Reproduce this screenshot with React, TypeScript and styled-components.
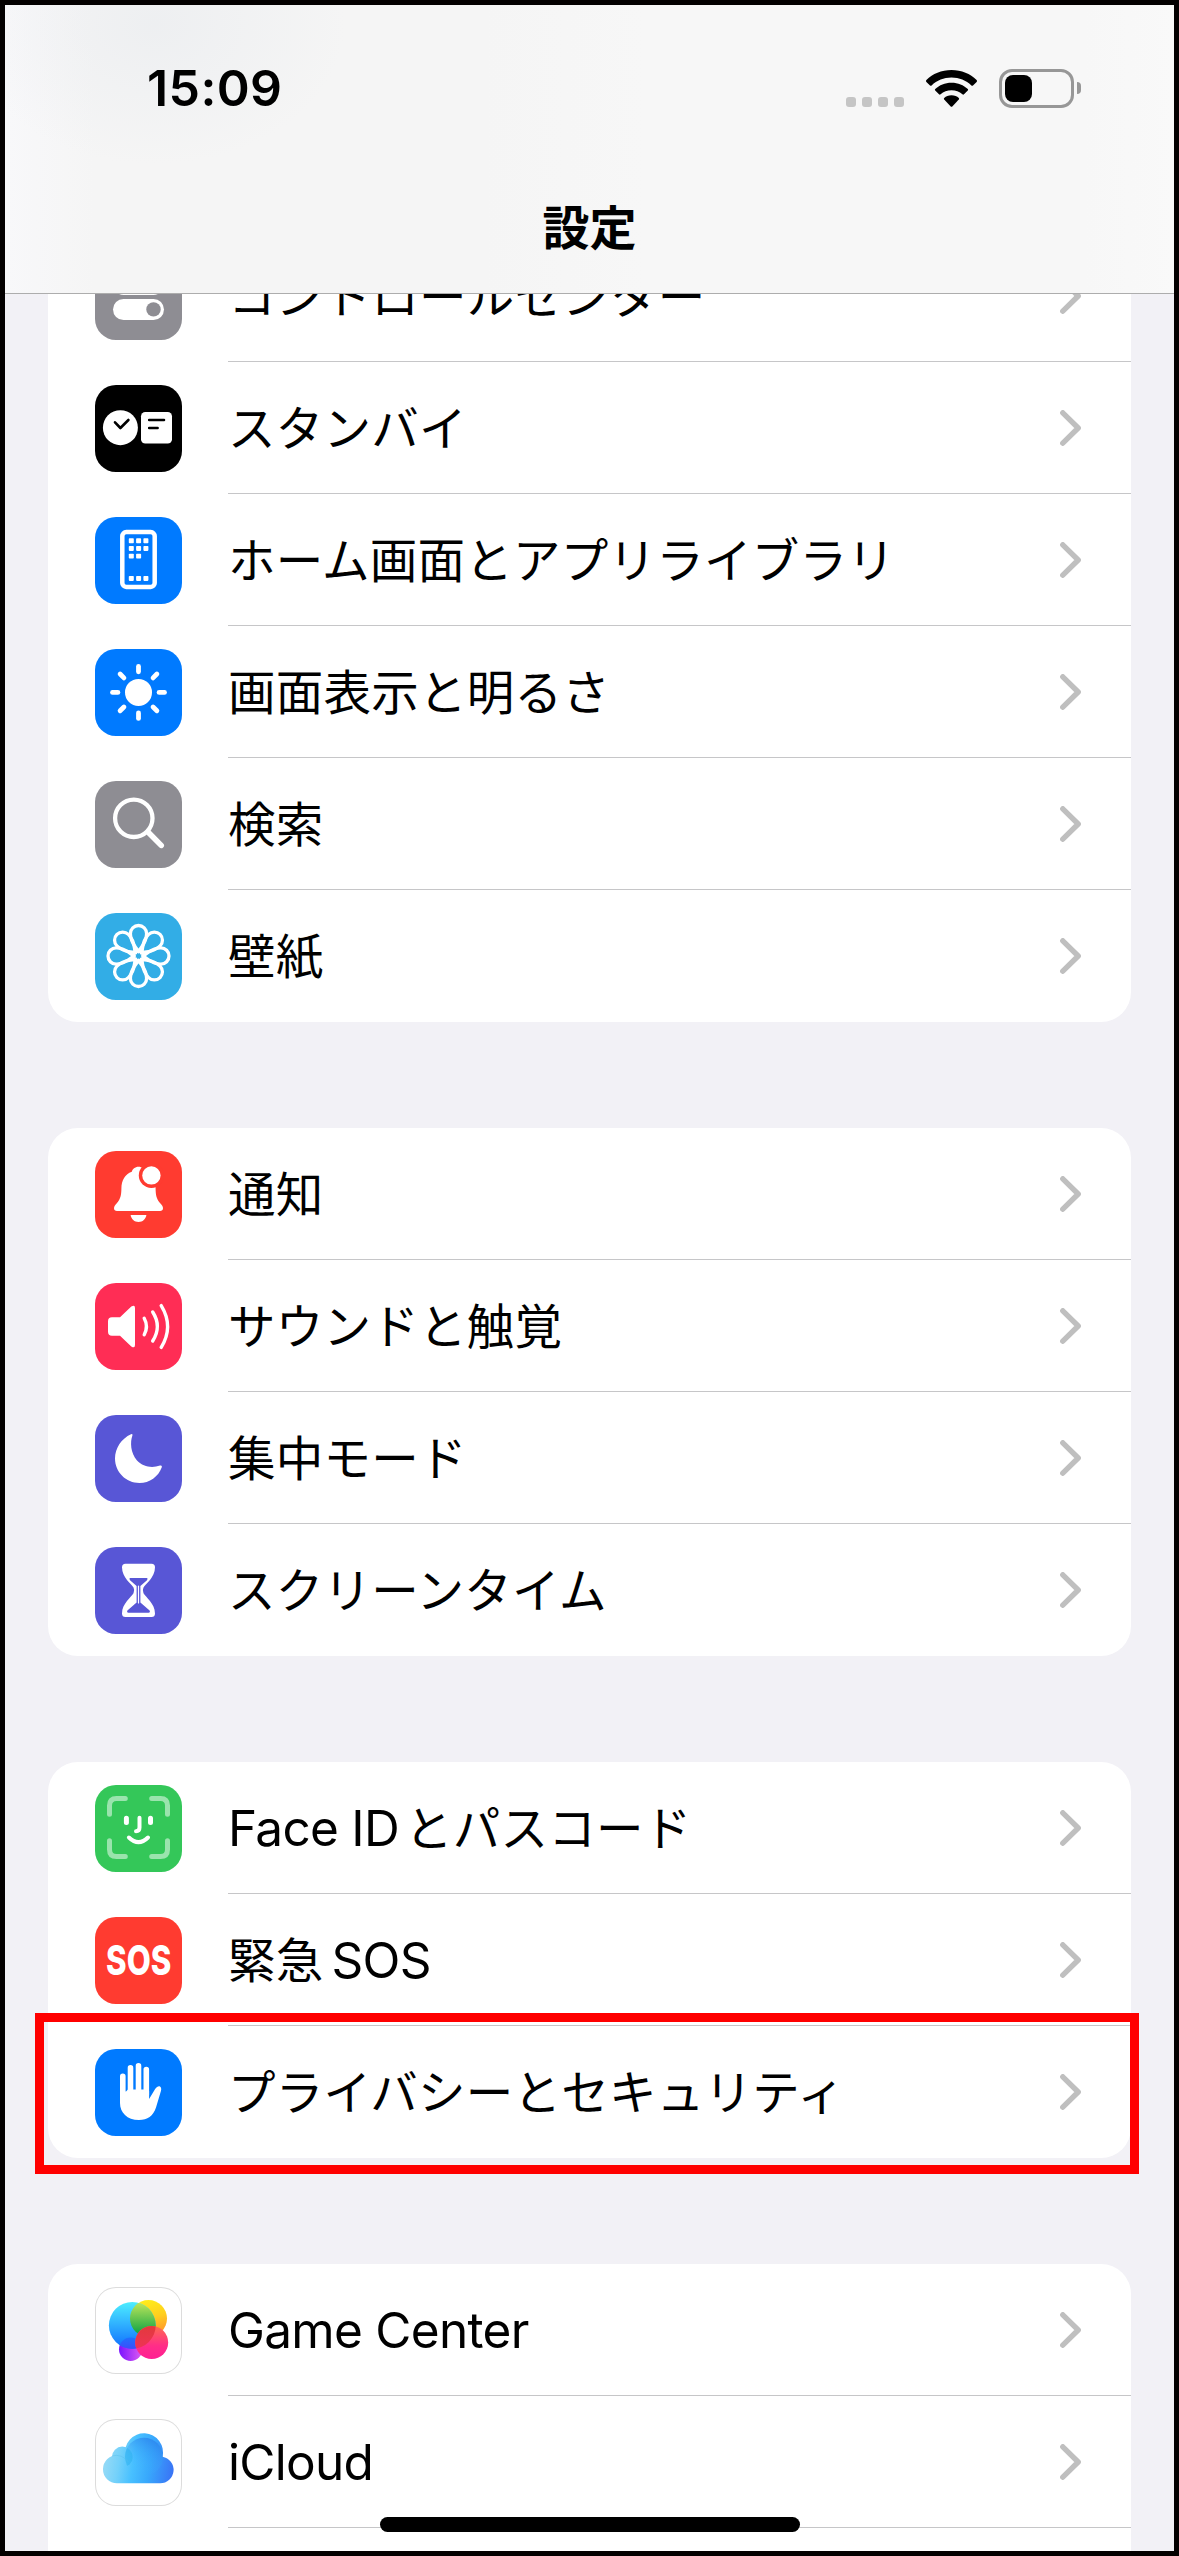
import React from 'react';
import styled, { createGlobalStyle } from 'styled-components';

const GlobalStyle = createGlobalStyle`
  * { box-sizing: border-box; }
  body {
    margin: 0;
    background: #f2f1f6;
    font-family: "Noto Sans CJK JP", Inter, sans-serif;
    color: #000;
  }
`;

const Phone = styled.div`
  position: relative;
  width: 1179px;
  height: 2556px;
  border: 5px solid #030000;
  background: #f2f1f6;
  display: flex;
  flex-direction: column;
  overflow: hidden;
`;

const Header = styled.header`
  flex: none;
  height: 289px;
  border-bottom: 1px solid #adadad;
  background:
    radial-gradient(ellipse 190px 140px at 150px 20px, rgba(230, 233, 237, 0.5), rgba(245, 245, 245, 0)),
    linear-gradient(90deg, #f8f8fa 0, #f5f5f5 90px, #f5f5f5 480px, #f7f7f7 640px, #f7f7f7 1080px, #f9f9f9 100%);
  display: flex;
  flex-direction: column;
`;

const StatusBar = styled.div`
  height: 166px;
  padding: 0 93px 0 142px;
  display: flex;
  justify-content: space-between;
  align-items: center;
`;

const Clock = styled.time`
  font: 600 50px/60px Inter, sans-serif;
  letter-spacing: 0.4px;
`;

const StatusIcons = styled.div`
  display: flex;
  align-items: flex-start;
`;

const Dots = styled.div`
  display: flex;
  gap: 6px;
  margin: 28px 22px 0 0;
`;

const Dot = styled.i`
  width: 10px;
  height: 10px;
  border-radius: 3px;
  background: #c5c5c5;
`;

const Wifi = styled.svg`
  width: 51px;
  height: 38px;
  margin: 1px 22px 0 0;
`;

const Battery = styled.div`
  width: 75px;
  height: 39px;
  padding: 3px;
  border: 3px solid #979797;
  border-radius: 13px;
`;

const Charge = styled.div`
  width: 27px;
  height: 27px;
  border-radius: 8px;
  background: #000;
`;

const BatteryCap = styled.div`
  width: 4px;
  height: 12px;
  margin: 13px 0 0 3px;
  border-radius: 0 5px 5px 0;
  background: #979797;
`;

const Title = styled.h1`
  margin: 19px 0 0;
  font-size: 47px;
  line-height: 70px;
  font-weight: 700;
  text-align: center;
`;

const ScrollArea = styled.main`
  flex: 1;
  min-height: 0;
  overflow: hidden;
  padding: 0 43px;
`;

const List = styled.div`
  margin-top: -64px;
  display: flex;
  flex-direction: column;
  gap: 106px;
`;

const Group = styled.section`
  background: #fff;
  border-radius: 30px;
`;

const RowBox = styled.div`
  position: relative;
  height: 132px;
  padding-left: 47px;
  display: flex;
  align-items: center;
`;

const Tile = styled.div<{ $bg: string; $outlined?: boolean }>`
  flex: none;
  width: 87px;
  height: 87px;
  margin-top: 1px;
  border-radius: 21px;
  overflow: hidden;
  background: ${(p) => p.$bg};
  box-shadow: ${(p) => (p.$outlined ? 'inset 0 0 0 1px #dcdcdc' : 'none')};

  svg {
    display: block;
    width: 87px;
    height: 87px;
  }
`;

const RowBody = styled.div<{ $line: boolean }>`
  flex: 1;
  height: 100%;
  margin-left: 46px;
  padding-right: 50px;
  border-bottom: 1px solid ${(p) => (p.$line ? '#c6c6c8' : 'transparent')};
  display: flex;
  justify-content: space-between;
  align-items: center;
`;

const Label = styled.span`
  padding-bottom: 3px;
  font-size: 47.5px;
  letter-spacing: 0.25px;
  line-height: 70px;
  white-space: nowrap;
`;

const Latin = styled.span<{ $after?: boolean; $before?: boolean }>`
  font-family: Inter, sans-serif;
  font-size: 49.5px;
  line-height: 0;
  letter-spacing: -0.7px;
  margin-right: ${(p) => (p.$after ? '6px' : '0')};
  margin-left: ${(p) => (p.$before ? '8px' : '0')};
`;

const Chevron = styled.svg`
  width: 21px;
  height: 36px;
`;

const Highlight = styled.div`
  position: absolute;
  left: -13px;
  top: -13px;
  width: 1104px;
  height: 161px;
  border: 9px solid #ff0000;
`;

const HomeIndicator = styled.div`
  position: absolute;
  left: 375px;
  bottom: 19px;
  width: 420px;
  height: 15px;
  border-radius: 8px;
  background: #000;
`;

const Icon = ({ children }: { children: React.ReactNode }) => (
  <svg viewBox="0 0 87 87" fill="none" strokeLinecap="round" strokeLinejoin="round">
    {children}
  </svg>
);

const ControlCenterIcon = () => (
  <Icon>
    <rect x="20" y="22.5" width="47" height="17.5" rx="8.7" stroke="#fff" strokeWidth="4" />
    <circle cx="29" cy="31" r="7.3" fill="#fff" />
    <rect x="18" y="46" width="51" height="21" rx="10.5" fill="#fff" />
    <circle cx="58.5" cy="56.4" r="7.2" fill="#8e8d93" />
  </Icon>
);

const StandByIcon = () => (
  <Icon>
    <circle cx="25.4" cy="42.7" r="17.5" fill="#fff" />
    <path d="M20 37.3 25.4 43l8-8" stroke="#000" strokeWidth="2.6" />
    <rect x="46" y="27" width="31" height="31.5" rx="4.3" fill="#fff" />
    <path d="M54.2 35H69M54.2 43H62.6" stroke="#000" strokeWidth="2.6" />
  </Icon>
);

const dotColumns = [33.8, 41.1, 48.4];
const appDots: [number, number][] = [
  ...[21.3, 29].flatMap((y) => dotColumns.map((x) => [x, y] as [number, number])),
  [33.8, 36.7],
  [41.1, 36.7],
  ...dotColumns.map((x) => [x, 59] as [number, number]),
];

const HomeScreenIcon = () => (
  <Icon>
    <rect x="27.3" y="15.1" width="32.4" height="54.8" rx="4" stroke="#fff" strokeWidth="4.5" />
    {appDots.map(([x, y]) => (
      <rect key={`${x}-${y}`} x={x} y={y} width="5" height="4.9" rx="0.8" fill="#fff" />
    ))}
  </Icon>
);

const BrightnessIcon = () => (
  <Icon>
    <circle cx="43.5" cy="43.4" r="13.5" fill="#fff" />
    {[0, 45, 90, 135, 180, 225, 270, 315].map((a) => (
      <path key={a} d="M43.5 17.4v5.4" stroke="#fff" strokeWidth="4.8" transform={`rotate(${a} 43.5 43.4)`} />
    ))}
  </Icon>
);

const SearchIcon = () => (
  <Icon>
    <circle cx="38.8" cy="37.3" r="18.7" stroke="#fff" strokeWidth="4.3" />
    <path d="M53 51 66.2 64.4" stroke="#fff" strokeWidth="5.6" />
  </Icon>
);

const WallpaperIcon = () => (
  <Icon>
    {[0, 45, 90, 135, 180, 225, 270, 315].map((a) => (
      <path
        key={a}
        d="M43.5 38.8C41.5 34 35.4 31 35.4 20.6a8.1 8.1 0 0 1 16.2 0C51.6 31 45.5 34 43.5 38.8Z"
        stroke="#fff"
        strokeWidth="3.3"
        transform={`rotate(${a} 43.5 43)`}
      />
    ))}
    <circle cx="43.5" cy="43" r="4.8" stroke="#fff" strokeWidth="2.6" />
  </Icon>
);

const BellIcon = () => (
  <Icon>
    <path
      d="M43.5 15.7C40 15.7 37.5 18 36.8 20.8 30 23 26.5 29.5 26.4 37.5 26.3 44 25.5 48 22 52 20 54.3 19 55.5 19 57.3 19 59 20.2 60 22 60H65C66.8 60 68 59 68 57.3 68 55.5 67 54.3 65 52 61.5 48 60.7 44 60.6 37.5 60.5 29.5 57 23 50.2 20.8 49.5 18 47 15.7 43.5 15.7Z"
      fill="#fff"
    />
    <path d="M35.6 64H51.4C50.8 68.2 47.6 71 43.5 71S36.2 68.2 35.6 64Z" fill="#fff" />
    <circle cx="56.4" cy="24.4" r="12.6" fill="#ff3b30" />
    <circle cx="56.4" cy="24.4" r="9.2" fill="#fff" />
  </Icon>
);

const SpeakerIcon = () => (
  <Icon>
    <path
      d="M17 34.3H25L36.3 23.6Q40 21.2 40 25V62Q40 65.8 36.3 63.4L25 52.7H17Q13 52.7 13 48.7V38.3Q13 34.3 17 34.3Z"
      fill="#fff"
    />
    <path
      d="M49.2 35.2Q53.7 43.5 49.2 51.8M57.7 29Q67 43.5 57.7 58M66.2 22.6Q79 43.5 66.2 64.4"
      stroke="#fff"
      strokeWidth="3.4"
    />
  </Icon>
);

const MoonIcon = () => (
  <Icon>
    <path
      d="M36 19.2Q38 18.3 37.4 20.5C35 27 35.5 38 42 45.5 48 52 57 53.3 65 50.6Q67.4 50 66.8 52.2C63.5 61.5 54.5 68 44.5 68 31 68 20 57 20 43.5 20 33 26.5 23.5 36 19.2Z"
      fill="#fff"
    />
  </Icon>
);

const HourglassIcon = () => (
  <Icon>
    <path
      d="M30.5 16.7H56.5Q60 16.7 60 20.2C60 30.5 50.5 37 48.5 40.5Q47 43.4 48.5 46.3C50.5 50 60 56.5 60 66.5Q60 70 56.5 70H30.5Q27 70 27 66.5C27 56.5 36.5 50 38.5 46.3Q40 43.4 38.5 40.5C36.5 37 27 30.5 27 20.2Q27 16.7 30.5 16.7Z"
      fill="#fff"
    />
    <path
      d="M35 31H52Q53.2 31.6 52 33.2L45.4 39V55.5L54.6 63.6Q55.6 65.7 53.6 65.7H33.4Q31.4 65.7 32.4 63.6L41.6 55.5V39L35 33.2Q33.8 31.6 35 31Z"
      fill="#5856d6"
    />
    <path d="M43.5 39V56" stroke="#fff" strokeWidth="1.2" />
  </Icon>
);

const FaceIdIcon = () => (
  <Icon>
    <path
      d="M14.5 29.3V20.5Q14.5 13.5 21.5 13.5H30.3M56.7 13.5H65.5Q72.5 13.5 72.5 20.5V29.3M72.5 55.7V64.5Q72.5 71.5 65.5 71.5H56.7M30.3 71.5H21.5Q14.5 71.5 14.5 64.5V55.7"
      stroke="#9ae4ad"
      strokeWidth="5"
    />
    <path d="M31.4 33.2V37.6M55.5 33.2V37.6" stroke="#fff" strokeWidth="5" />
    <path d="M44.5 32.8V42.5Q44.5 46.2 41 46.2" stroke="#fff" strokeWidth="4" />
    <path d="M33.9 52.5Q43.5 61.8 53 52.5" stroke="#fff" strokeWidth="4" />
  </Icon>
);

const SosIcon = () => (
  <Icon>
    <text
      transform="translate(43.7 58.4) scale(0.76 1)"
      textAnchor="middle"
      fill="#fff"
      fontFamily="Inter, sans-serif"
      fontWeight="800"
      fontSize="41"
    >
      SOS
    </text>
  </Icon>
);

const HandIcon = () => (
  <Icon>
    <path d="M27.8 27.2V46M35.5 18.9V46M43.5 16.9V46M51.3 20.5V46" stroke="#fff" strokeWidth="5.6" />
    <path
      d="M25 42.5 31 42.5 33 40.5H49L54.1 42V50L60.3 39.8Q62.2 36.7 64.6 37.3 66.8 38.4 66 41.8L61 58.5C58.2 67.2 52.5 71 44 71 32 71 25 63.5 25 54Z"
      fill="#fff"
    />
  </Icon>
);

const GameCenterIcon = () => (
  <Icon>
    <defs>
      <linearGradient id="gcBlue" x1="0" y1="0" x2="0" y2="1">
        <stop offset="0" stopColor="#4deeff" />
        <stop offset="1" stopColor="#0f6dff" />
      </linearGradient>
      <linearGradient id="gcYellow" x1="0" y1="0" x2="0.3" y2="1">
        <stop offset="0" stopColor="#fff41a" />
        <stop offset="0.6" stopColor="#ffce1f" />
        <stop offset="1" stopColor="#ff9a2a" />
      </linearGradient>
      <linearGradient id="gcGreen" x1="0" y1="0" x2="0" y2="1">
        <stop offset="0" stopColor="#cdeb5c" />
        <stop offset="0.9" stopColor="#12a544" />
      </linearGradient>
      <linearGradient id="gcPink" x1="0" y1="0" x2="0" y2="1">
        <stop offset="0" stopColor="#ff6a50" />
        <stop offset="0.6" stopColor="#ff2d88" />
        <stop offset="1" stopColor="#ff1f93" />
      </linearGradient>
      <linearGradient id="gcRed" x1="0" y1="0" x2="0" y2="1">
        <stop offset="0" stopColor="#e23a3c" />
        <stop offset="1" stopColor="#f52f62" />
      </linearGradient>
      <linearGradient id="gcPurple" x1="0" y1="0" x2="1" y2="0">
        <stop offset="0" stopColor="#7a14ff" />
        <stop offset="1" stopColor="#e05cf0" />
      </linearGradient>
      <linearGradient id="gcViolet" x1="0" y1="0" x2="0" y2="1">
        <stop offset="0" stopColor="#1f70ff" />
        <stop offset="1" stopColor="#5a28f5" />
      </linearGradient>
      <clipPath id="gcClip">
        <circle cx="37.3" cy="38.4" r="23.4" />
      </clipPath>
    </defs>
    <circle cx="35.7" cy="62.3" r="11.7" fill="url(#gcPurple)" />
    <circle cx="53.5" cy="31.5" r="18.5" fill="url(#gcYellow)" />
    <circle cx="37.3" cy="38.4" r="23.4" fill="url(#gcBlue)" />
    <g clipPath="url(#gcClip)">
      <circle cx="35.7" cy="62.3" r="11.7" fill="url(#gcViolet)" />
      <circle cx="53.5" cy="31.5" r="18.5" fill="url(#gcGreen)" />
    </g>
    <circle cx="56.7" cy="55.5" r="16.5" fill="url(#gcPink)" />
    <g clipPath="url(#gcClip)">
      <circle cx="56.7" cy="55.5" r="16.5" fill="url(#gcRed)" />
    </g>
  </Icon>
);

const ICloudIcon = () => (
  <Icon>
    <defs>
      <linearGradient id="cloudBase" gradientUnits="userSpaceOnUse" x1="8" y1="42" x2="79" y2="54">
        <stop offset="0" stopColor="#98dbf6" />
        <stop offset="0.22" stopColor="#74d1fa" />
        <stop offset="0.42" stopColor="#48c0ff" />
        <stop offset="0.65" stopColor="#38a8fc" />
        <stop offset="1" stopColor="#3a72f5" />
      </linearGradient>
      <linearGradient id="cloudTop" gradientUnits="userSpaceOnUse" x1="60" y1="22" x2="44" y2="50">
        <stop offset="0" stopColor="#2c86ee" stopOpacity="0.85" />
        <stop offset="1" stopColor="#3fb4ff" stopOpacity="0" />
      </linearGradient>
      <clipPath id="cloudPuff">
        <circle cx="27.3" cy="38" r="10.4" />
      </clipPath>
    </defs>
    <g fill="url(#cloudBase)">
      <circle cx="27.3" cy="38" r="10.4" />
      <path d="M22 36.2A14 14 0 0 0 22 64.3H65.2A13.4 13.4 0 0 0 67.5 37.7 19 19 0 1 0 30.2 36Z" />
    </g>
    <circle cx="49" cy="37.8" r="19" fill="url(#cloudTop)" />
    <circle cx="49" cy="37.8" r="19" fill="#2cb0ee" fillOpacity="0.55" clipPath="url(#cloudPuff)" />
    <path d="M17.5 36.8A14 14 0 0 1 33 42.5" stroke="#55bfe8" strokeOpacity="0.5" strokeWidth="0.8" />
  </Icon>
);

type RowData = {
  label: React.ReactNode;
  icon: React.ReactNode;
  bg: string;
  outlined?: boolean;
  highlighted?: boolean;
};

const groups: RowData[][] = [
  [
    { label: 'コントロールセンター', icon: <ControlCenterIcon />, bg: '#8e8d93' },
    { label: 'スタンバイ', icon: <StandByIcon />, bg: '#000' },
    { label: 'ホーム画面とアプリライブラリ', icon: <HomeScreenIcon />, bg: '#007aff' },
    { label: '画面表示と明るさ', icon: <BrightnessIcon />, bg: '#007aff' },
    { label: '検索', icon: <SearchIcon />, bg: '#8e8d93' },
    { label: '壁紙', icon: <WallpaperIcon />, bg: '#32ade6' },
  ],
  [
    { label: '通知', icon: <BellIcon />, bg: '#ff3b30' },
    { label: 'サウンドと触覚', icon: <SpeakerIcon />, bg: '#ff2d55' },
    { label: '集中モード', icon: <MoonIcon />, bg: '#5856d6' },
    { label: 'スクリーンタイム', icon: <HourglassIcon />, bg: '#5856d6' },
  ],
  [
    { label: <><Latin $after>Face ID</Latin>とパスコード</>, icon: <FaceIdIcon />, bg: '#34c759' },
    { label: <>緊急<Latin $before>SOS</Latin></>, icon: <SosIcon />, bg: '#ff3b30' },
    { label: 'プライバシーとセキュリティ', icon: <HandIcon />, bg: '#007aff', highlighted: true },
  ],
  [
    { label: <Latin>Game Center</Latin>, icon: <GameCenterIcon />, bg: '#fff', outlined: true },
    { label: <Latin>iCloud</Latin>, icon: <ICloudIcon />, bg: '#fff', outlined: true },
  ],
];

const Row = ({ row, line }: { row: RowData; line: boolean }) => (
  <RowBox>
    <Tile $bg={row.bg} $outlined={row.outlined}>{row.icon}</Tile>
    <RowBody $line={line}>
      <Label>{row.label}</Label>
      <Chevron viewBox="0 0 21 36" fill="none">
        <path d="M2.8 2.8 18.2 18 2.8 33.2" stroke="#bfbfbf" strokeWidth="5.4" strokeLinecap="round" strokeLinejoin="round" />
      </Chevron>
    </RowBody>
    {row.highlighted && <Highlight />}
  </RowBox>
);

const TrailingSpace = styled.div`
  height: 60px;
`;

export default function App() {
  return (
    <>
      <GlobalStyle />
      <Phone>
        <Header>
          <StatusBar>
            <Clock>15:09</Clock>
            <StatusIcons>
              <Dots>
                <Dot />
                <Dot />
                <Dot />
                <Dot />
              </Dots>
              <Wifi viewBox="0 0 51 38">
                <path d="M25.5 0C35.6 0 44.3 3.7 50.6 10.1Q51.4 11 50.6 11.9L47 15.4Q46.2 16.1 45.4 15.4C40 10.3 33.2 7.5 25.5 7.5S11 10.3 5.6 15.4Q4.8 16.1 4 15.4L.4 11.9Q-.4 11 .4 10.1C6.7 3.7 15.4 0 25.5 0Z" />
                <path d="M25.5 12.7C32.2 12.7 37.5 15 41.8 19Q42.5 19.8 41.8 20.6L38 24.3Q37.2 25 36.4 24.3C33.4 21.6 29.8 20.2 25.5 20.2S17.6 21.6 14.6 24.3Q13.8 25 13 24.3L9.2 20.6Q8.5 19.8 9.2 19C13.5 15 18.8 12.7 25.5 12.7Z" />
                <path d="M25.5 25.3C28.6 25.3 31 26.3 32.8 28Q33.5 28.8 32.8 29.6L26.3 36.5Q25.5 37.2 24.7 36.5L18.2 29.6Q17.5 28.8 18.2 28C20 26.3 22.4 25.3 25.5 25.3Z" />
              </Wifi>
              <Battery>
                <Charge />
              </Battery>
              <BatteryCap />
            </StatusIcons>
          </StatusBar>
          <Title>設定</Title>
        </Header>
        <ScrollArea>
          <List>
            {groups.map((rows, g) => (
              <Group key={g}>
                {rows.map((row, i) => (
                  <Row key={i} row={row} line={i < rows.length - 1 || g === groups.length - 1} />
                ))}
                {g === groups.length - 1 && <TrailingSpace />}
              </Group>
            ))}
          </List>
        </ScrollArea>
        <HomeIndicator />
      </Phone>
    </>
  );
}
